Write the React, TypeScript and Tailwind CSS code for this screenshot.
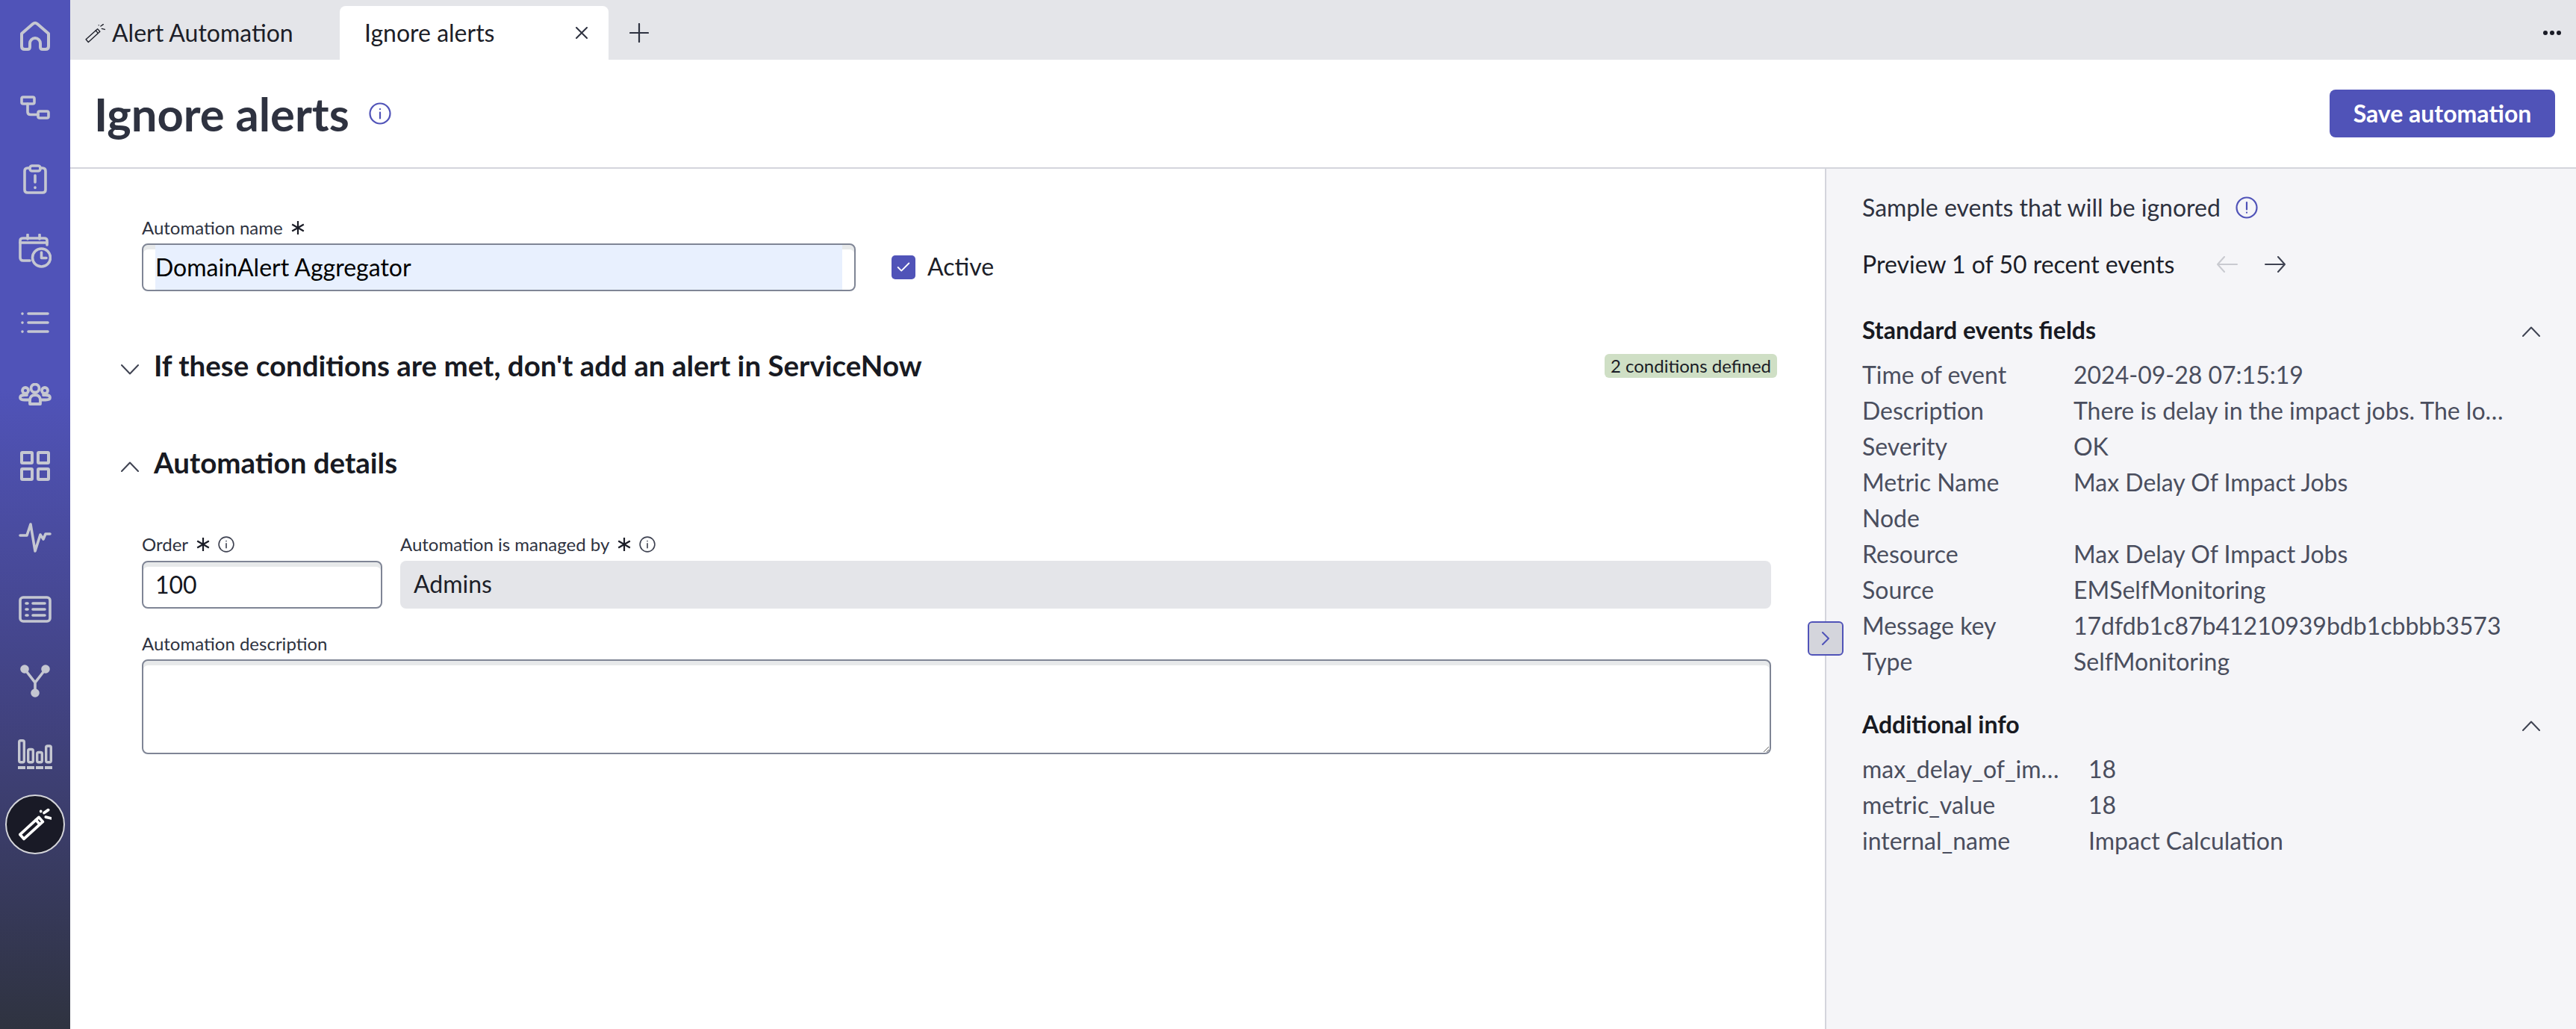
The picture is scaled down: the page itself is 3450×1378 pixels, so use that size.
import { Check } from "lucide-react";
import type { ReactNode } from "react";

const eventFields = [
  ["Time of event", "2024-09-28 07:15:19"],
  ["Description", "There is delay in the impact jobs. The lo…"],
  ["Severity", "OK"],
  ["Metric Name", "Max Delay Of Impact Jobs"],
  ["Node", ""],
  ["Resource", "Max Delay Of Impact Jobs"],
  ["Source", "EMSelfMonitoring"],
  ["Message key", "17dfdb1c87b41210939bdb1cbbbb3573"],
  ["Type", "SelfMonitoring"],
];

const additionalInfo = [
  ["max_delay_of_im…", "18"],
  ["metric_value", "18"],
  ["internal_name", "Impact Calculation"],
];

function Icon({ w, h, width, children }: { w: number; h: number; width?: number; children: ReactNode }) {
  return (
    <svg width={w} height={h} viewBox={`0 0 ${w} ${h}`} fill="none" stroke="currentColor" strokeWidth={width ?? 4} strokeLinecap="round" strokeLinejoin="round" className="shrink-0">
      {children}
    </svg>
  );
}

function Wand({ size, line }: { size: number; line: number }) {
  return (
    <svg width={size} height={size} viewBox="0 0 40 40" fill="none" stroke="currentColor" strokeWidth={line} strokeLinecap="round" strokeLinejoin="round" className="shrink-0">
      <path d="M24.6 11.3 L29.4 16.7 L6.4 37.7 L1.6 32.3 Z" />
      <path d="M21 14.5 L25.5 19.8" />
      <path d="M27 4 V4.2 M31 6 L36 2.4 M33 11 L39 12.5" />
    </svg>
  );
}

function Asterisk() {
  return (
    <svg width="20" height="20" viewBox="0 0 20 20" fill="none" stroke="#1a1c26" strokeWidth="2.2" className="shrink-0">
      <path d="M10 1 V19 M2.2 5.5 L17.8 14.5 M17.8 5.5 L2.2 14.5" />
    </svg>
  );
}

function InfoDot({ size, color, mark = "i" }: { size: number; color: string; mark?: "i" | "!" }) {
  return (
    <svg width={size} height={size} viewBox="0 0 30 30" fill="none" stroke={color} strokeWidth="2.2" strokeLinecap="round" className="shrink-0">
      <circle cx="15" cy="15" r="13.5" />
      {mark === "i" ? <path d="M15 13.5 V21.5 M15 9 V9.2" /> : <path d="M15 8 V17.5 M15 21.5 V21.7" />}
    </svg>
  );
}

function Chevron({ open, className }: { open: boolean; className?: string }) {
  return (
    <svg width="24" height="14" viewBox="0 0 24 14" fill="none" stroke="currentColor" strokeWidth="2" strokeLinecap="round" strokeLinejoin="round" className={`shrink-0 ${className ?? ""}`}>
      <path d={open ? "M1 13 L12 1.5 L23 13" : "M1 1 L12 12.5 L23 1"} />
    </svg>
  );
}

function Sidebar() {
  return (
    <aside className="w-[94px] shrink-0 flex flex-col items-center text-[#c5c7d1] bg-[linear-gradient(180deg,#5053b8_0%,#5053b8_38%,#41427f_70%,#2f3340_100%)]">
      <div className="h-24 flex items-center justify-center">
        <Icon w={40} h={40}>
          <path d="M2 17 L17 4 Q20 1.5 23 4 L38 17 V34 Q38 38 34 38 H30 Q27 38 27 35 V30 A7 7 0 0 0 13 30 V35 Q13 38 10 38 H6 Q2 38 2 34 Z" />
        </Icon>
      </div>
      <div className="h-24 flex items-center justify-center">
        <Icon w={40} h={32} width={3.6}>
          <rect x="2" y="2" width="17" height="9" rx="2" />
          <rect x="24" y="21" width="14" height="9" rx="2" />
          <path d="M10 11 V22 Q10 25.5 14 25.5 H24" />
        </Icon>
      </div>
      <div className="h-24 flex items-center justify-center">
        <Icon w={32} h={40} width={3.6}>
          <path d="M9 5 H6 Q2 5 2 9 V34 Q2 38 6 38 H26 Q30 38 30 34 V9 Q30 5 26 5 H23" />
          <rect x="9" y="2" width="14" height="7" rx="3" />
          <path d="M16 15 V24 M16 31 V31.5" />
        </Icon>
      </div>
      <div className="h-24 flex items-center justify-center">
        <Icon w={44} h={46} width={3.6}>
          <path d="M15 36 H6 Q2 36 2 32 V9 Q2 6 6 6 H34 Q38 6 38 9 V15" />
          <path d="M2 12 H38 M12 1.5 V7 M28 1.5 V7" />
          <circle cx="30.5" cy="32" r="12" />
          <path d="M30.5 25 V32.5 H37" />
        </Icon>
      </div>
      <div className="h-24 flex items-center justify-center">
        <Icon w={38} h={30} width={3.6}>
          <path d="M2 3 V3.1 M2 15 V15.1 M2 27 V27.1 M10 3 H36 M10 15 H36 M10 27 H36" />
        </Icon>
      </div>
      <div className="h-24 flex items-center justify-center">
        <Icon w={44} h={30} width={3.8}>
          <circle cx="22" cy="7" r="5.5" />
          <circle cx="9" cy="10" r="4" />
          <circle cx="35" cy="10" r="4" />
          <path d="M15 28 V23 Q15 16 22 16 Q29 16 29 23 V28 Z" />
          <path d="M14 22.5 H8 Q2 22.5 2 19.5 Q2 16 8 16 H11 M30 22.5 H36 Q42 22.5 42 19.5 Q42 16 36 16 H33" />
        </Icon>
      </div>
      <div className="h-24 flex items-center justify-center">
        <Icon w={40} h={40}>
          <rect x="2" y="2" width="14" height="14" rx="1" />
          <rect x="24" y="2" width="14" height="14" rx="1" />
          <rect x="2" y="24" width="14" height="14" rx="1" />
          <rect x="24" y="24" width="14" height="14" rx="1" />
        </Icon>
      </div>
      <div className="h-24 flex items-center justify-center">
        <Icon w={44} h={40} width={3.6}>
          <path d="M2 17 H11 L16 2 L22 38 L29 16 L33 22 L36 15 H42" />
        </Icon>
      </div>
      <div className="h-24 flex items-center justify-center">
        <Icon w={44} h={36} width={3.6}>
          <rect x="2" y="2" width="40" height="32" rx="4" />
          <path d="M10 10 H12 M10 18 H12 M10 26 H12 M19 10 H35 M19 18 H35 M19 26 H35" />
        </Icon>
      </div>
      <div className="h-24 flex items-center justify-center">
        <svg width="40" height="44" viewBox="0 0 40 44" fill="currentColor" stroke="currentColor" strokeWidth="3.6">
          <circle cx="6" cy="6" r="4" />
          <circle cx="34" cy="6" r="4" />
          <circle cx="20" cy="38" r="4" />
          <path d="M6 6 L20 24 L34 6 M20 24 V38" fill="none" />
        </svg>
      </div>
      <div className="h-24 pt-1 flex items-center justify-center">
        <svg width="46" height="40" viewBox="0 0 46 40" fill="none" stroke="currentColor" strokeWidth="3.4">
          <rect x="1.7" y="1.7" width="6.6" height="29" rx="2" />
          <rect x="13.7" y="13.5" width="6.6" height="17.2" rx="2" />
          <rect x="25.7" y="17.5" width="6.6" height="13.2" rx="2" />
          <rect x="37.7" y="9" width="6.6" height="21.7" rx="2" />
          <path d="M0 38 H10 M12 38 H22 M24 38 H34 M36 38 H46" strokeWidth="4" />
        </svg>
      </div>
      <div className="h-24 flex items-center justify-center">
        <div className="w-20 h-20 rounded-full bg-[#191a26] border-2 border-[#d4d5da] flex items-center justify-center text-white">
          <Wand size={44} line={3.4} />
        </div>
      </div>
    </aside>
  );
}

function TabBar() {
  return (
    <div className="h-20 shrink-0 flex items-end bg-[#e4e5e9] text-[32px] text-[#1c1e28]">
      <div className="w-[361px] h-[72px] shrink-0 flex items-center pl-5 gap-[9px]">
        <Wand size={27} line={2} />
        <span>Alert Automation</span>
      </div>
      <div className="w-[360px] h-[72px] shrink-0 flex items-center justify-between pl-[33px] pr-[28px] bg-white rounded-t-lg">
        <span>Ignore alerts</span>
        <svg width="16" height="16" viewBox="0 0 16 16" fill="none" stroke="#2e3240" strokeWidth="2" strokeLinecap="round" className="shrink-0">
          <path d="M1 1 L15 15 M15 1 L1 15" />
        </svg>
      </div>
      <div className="h-[72px] flex items-center ml-[28px]">
        <svg width="26" height="26" viewBox="0 0 26 26" fill="none" stroke="#2e3240" strokeWidth="2.2" strokeLinecap="round" className="shrink-0">
          <path d="M13 1 V25 M1 13 H25" />
        </svg>
      </div>
      <div className="ml-auto h-[72px] pr-5 flex items-center gap-[3px]">
        <span className="w-[6px] h-[6px] rounded-full bg-[#1a1c26]" />
        <span className="w-[6px] h-[6px] rounded-full bg-[#1a1c26]" />
        <span className="w-[6px] h-[6px] rounded-full bg-[#1a1c26]" />
      </div>
    </div>
  );
}

function FieldLabel({ children }: { children: ReactNode }) {
  return <div className="h-8 pb-[2px] flex items-center gap-[10px] text-[24px] text-[#2e3240]">{children}</div>;
}

function SectionRow({ open, title, badge }: { open: boolean; title: string; badge?: string }) {
  return (
    <div className="h-16 flex items-center -ml-7 -mr-2">
      <div className="w-6 shrink-0 flex justify-center text-[#3f4352] pt-[10px]">
        <Chevron open={open} />
      </div>
      <h2 className="ml-5 text-[38.5px] font-bold text-[#181a22]">{title}</h2>
      {badge && (
        <span className="ml-auto h-8 px-[8px] flex items-center rounded-md bg-[#cfdfc5] text-[24px] text-[#1a1c26]">{badge}</span>
      )}
    </div>
  );
}

function FormPanel() {
  return (
    <section className="flex-1 min-w-0 pl-[96px] pr-[72px] pt-16">
      <FieldLabel>
        <span>Automation name</span>
        <Asterisk />
      </FieldLabel>
      <div className="mt-1 flex items-center">
        <div className="w-[956px] h-16 px-4 rounded-lg border-2 border-[#7f8595] shadow-[inset_0_6px_0_#e7e9ea] bg-white">
          <input readOnly value="DomainAlert Aggregator" className="w-full h-full pb-[2px] bg-[#e8f0fe] text-[32px] text-black outline-none" />
        </div>
        <label className="ml-12 flex items-center gap-4 text-[32px] text-[#1c1e28]">
          <span className="w-8 h-8 rounded-[5px] bg-[#5053b8] flex items-center justify-center">
            <Check size={22} strokeWidth={2} className="text-white" />
          </span>
          <span className="pb-[3px]">Active</span>
        </label>
      </div>

      <div className="mt-[68px]">
        <SectionRow open={false} title="If these conditions are met, don't add an alert in ServiceNow" badge="2 conditions defined" />
      </div>
      <div className="mt-[66px]">
        <SectionRow open title="Automation details" />
      </div>

      <div className="mt-[62px] flex gap-6">
        <div className="w-[322px] shrink-0">
          <FieldLabel>
            <span>Order</span>
            <Asterisk />
            <InfoDot size={22} color="#3f4352" />
          </FieldLabel>
          <input readOnly value="100" className="mt-[5px] w-full h-16 pl-4 pr-4 pb-[2px] rounded-lg border-2 border-[#7f8595] shadow-[inset_0_6px_0_#e7e9ea] text-[32px] text-[#14161e] outline-none" />
        </div>
        <div className="flex-1 min-w-0">
          <FieldLabel>
            <span>Automation is managed by</span>
            <Asterisk />
            <InfoDot size={22} color="#3f4352" />
          </FieldLabel>
          <div className="mt-[5px] h-16 px-[18px] pb-[2px] flex items-center rounded-lg bg-[#e4e5e9] text-[32px] text-[#1c1e28]">Admins</div>
        </div>
      </div>

      <div className="mt-8">
        <FieldLabel>
          <span>Automation description</span>
        </FieldLabel>
        <textarea readOnly className="block mt-1 w-full h-[127px] rounded-lg border-2 border-[#7f8595] shadow-[inset_0_6px_0_#e7e9ea] resize-y outline-none" />
      </div>
    </section>
  );
}

function FieldRows({ rows, labelWidth }: { rows: string[][]; labelWidth: string }) {
  return (
    <div className="mt-[14px] text-[32px] text-[#4a4e5e]">
      {rows.map(([label, value]) => (
        <div key={label} className="h-12 flex items-center">
          <span className={`${labelWidth} shrink-0 whitespace-nowrap`}>{label}</span>
          <span className="whitespace-nowrap">{value}</span>
        </div>
      ))}
    </div>
  );
}

function PreviewPanel() {
  return (
    <aside className="relative w-[1006px] shrink-0 pl-12 pr-12 pt-[30px] border-l-2 border-[#d4d5dc] bg-[#f5f5f8]">
      <button className="absolute -left-[25px] top-[606px] w-12 h-[46px] rounded-md border-2 border-[#5053b8] bg-[#d4d5dc] flex items-center justify-center text-[#5053b8]">
        <svg width="12" height="18" viewBox="0 0 12 18" fill="none" stroke="currentColor" strokeWidth="2" strokeLinecap="round" strokeLinejoin="round">
          <path d="M2 1 L10 9 L2 17" />
        </svg>
      </button>
      <div className="h-11 flex items-center gap-5 text-[32px] text-[#2e3240]">
        <span>Sample events that will be ignored</span>
        <InfoDot size={30} color="#5053b8" mark="!" />
      </div>
      <div className="mt-8 h-11 flex items-center text-[32px] text-[#1c1e28]">
        <span>Preview 1 of 50 recent events</span>
        <svg width="28" height="22" viewBox="0 0 28 22" fill="none" stroke="#c9cad0" strokeWidth="2" strokeLinecap="round" strokeLinejoin="round" className="ml-[57px]">
          <path d="M27 11 H1 M10 1 L1 11 L10 21" />
        </svg>
        <svg width="28" height="22" viewBox="0 0 28 22" fill="none" stroke="#3f4352" strokeWidth="2" strokeLinecap="round" strokeLinejoin="round" className="ml-9">
          <path d="M1 11 H27 M18 1 L27 11 L18 21" />
        </svg>
      </div>
      <div className="mt-11 h-11 flex items-center justify-between">
        <h3 className="text-[32px] font-bold text-[#181a22]">Standard events fields</h3>
        <Chevron open className="text-[#3f4352] mt-1" />
      </div>
      <FieldRows rows={eventFields} labelWidth="w-[283px]" />
      <div className="mt-[38px] h-11 flex items-center justify-between">
        <h3 className="text-[32px] font-bold text-[#181a22]">Additional info</h3>
        <Chevron open className="text-[#3f4352] mt-1" />
      </div>
      <FieldRows rows={additionalInfo} labelWidth="w-[303px]" />
    </aside>
  );
}

export default function App() {
  return (
    <div className="h-screen flex overflow-hidden bg-white font-[Lato,sans-serif]">
      <Sidebar />
      <main className="flex-1 min-w-0 flex flex-col">
        <TabBar />
        <header className="h-[146px] shrink-0 flex items-center justify-between pl-8 pr-7 border-b-2 border-[#d4d5dc]">
          <div className="flex items-center gap-[26px]">
            <h1 className="text-[61.5px] font-bold text-[#2e3240]">Ignore alerts</h1>
            <InfoDot size={30} color="#5053b8" />
          </div>
          <button className="h-16 w-[302px] rounded-lg bg-[#5053b8] text-[32px] font-bold text-white">Save automation</button>
        </header>
        <div className="flex-1 min-h-0 flex">
          <FormPanel />
          <PreviewPanel />
        </div>
      </main>
    </div>
  );
}
